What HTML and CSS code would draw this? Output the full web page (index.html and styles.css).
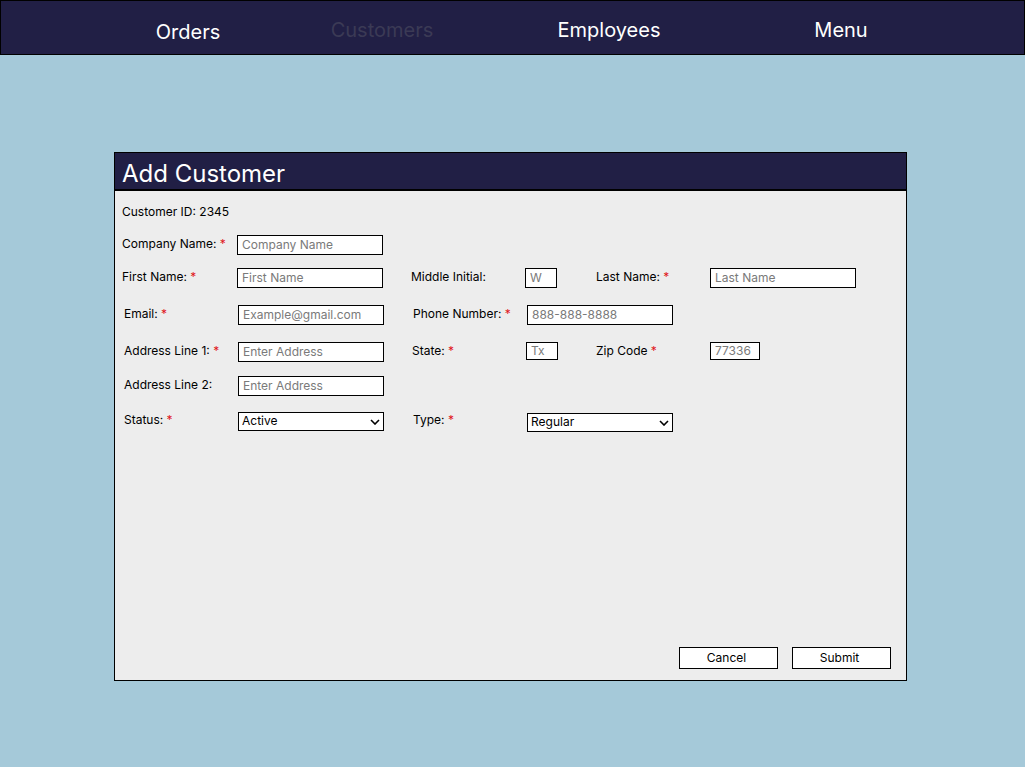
FILE: index.html
```html
<!DOCTYPE html>
<html>
<head>
<meta charset="utf-8">
<link rel="stylesheet" href="styles.css">
</head>
<body>
<nav class="topnav">
  <a class="nav-item nav-orders">Orders</a>
  <a class="nav-item nav-customers">Customers</a>
  <a class="nav-item nav-employees">Employees</a>
  <a class="nav-item nav-menu">Menu</a>
</nav>

<section class="panel">
  <header class="panel-head">Add Customer</header>
  <div class="panel-body">
    <div class="row row-id">Customer ID: 2345</div>

    <div class="row row-company">
      <label class="lbl">Company Name: <span class="req">*</span></label>
      <input class="inp w-wide" placeholder="Company Name">
    </div>

    <div class="row row-name">
      <label class="lbl">First Name: <span class="req">*</span></label>
      <input class="inp w-wide" placeholder="First Name">
      <label class="lbl lbl-mid">Middle Initial:</label>
      <input class="inp w-tiny" placeholder="W">
      <label class="lbl lbl-third">Last Name: <span class="req">*</span></label>
      <input class="inp w-wide" placeholder="Last Name">
    </div>

    <div class="row row-email">
      <label class="lbl">Email: <span class="req">*</span></label>
      <input class="inp w-wide" placeholder="Example@gmail.com">
      <label class="lbl lbl-mid">Phone Number: <span class="req">*</span></label>
      <input class="inp w-wide" placeholder="888-888-8888">
    </div>

    <div class="row row-addr1">
      <label class="lbl">Address Line 1: <span class="req">*</span></label>
      <input class="inp w-wide" placeholder="Enter Address">
      <label class="lbl lbl-mid">State: <span class="req">*</span></label>
      <input class="inp w-tiny short" placeholder="Tx">
      <label class="lbl lbl-zip">Zip Code <span class="req">*</span></label>
      <input class="inp w-zip short" placeholder="77336">
    </div>

    <div class="row row-addr2">
      <label class="lbl">Address Line 2:</label>
      <input class="inp w-wide" placeholder="Enter Address">
    </div>

    <div class="row row-status">
      <label class="lbl">Status: <span class="req">*</span></label>
      <div class="sel-wrap">
        <select class="sel"><option>Active</option></select>
        <svg class="chev" width="10" height="6" viewBox="0 0 10 6"><path d="M1 1 L5 5 L9 1" fill="none" stroke="#000" stroke-width="1.6"/></svg>
      </div>
      <label class="lbl lbl-type">Type: <span class="req">*</span></label>
      <div class="sel-wrap sel-type">
        <select class="sel"><option>Regular</option></select>
        <svg class="chev" width="10" height="6" viewBox="0 0 10 6"><path d="M1 1 L5 5 L9 1" fill="none" stroke="#000" stroke-width="1.6"/></svg>
      </div>
    </div>

    <div class="actions">
      <button class="btn">Cancel</button>
      <button class="btn">Submit</button>
    </div>
  </div>
</section>
</body>
</html>
```

FILE: styles.css
```css
* { box-sizing: border-box; }

html, body {
  margin: 0;
  padding: 0;
}

body {
  background: #a5c9d9;
  font-family: Inter, "Noto Sans", sans-serif;
  width: 1025px;
  height: 767px;
  overflow: hidden;
}

.topnav {
  height: 55px;
  background: #211f45;
  border: 1px solid #000;
  display: flex;
  align-items: center;
  padding: 4px 0 0 90px;
}

.nav-item {
  color: #fff;
  font-size: 20px;
  text-align: center;
  display: block;
}

.nav-orders { width: 194px; padding-top: 4px; }
.nav-customers { width: 194px; color: #3b3a55; }
.nav-employees { width: 260px; }
.nav-menu { width: 204px; }

.panel {
  margin: 97px 0 0 114px;
  width: 793px;
  height: 529px;
  border: 1px solid #000;
  background: #ededed;
  display: flex;
  flex-direction: column;
}

.panel-head {
  height: 38px;
  background: #211f45;
  border-bottom: 2px solid #000;
  color: #fff;
  font-size: 24px;
  line-height: 38px;
  padding: 2px 0 0 7px;
}

.panel-body {
  flex: 1;
  display: flex;
  flex-direction: column;
  padding: 11px 15px 11px 7px;
}

.row {
  display: flex;
  align-items: center;
  height: 20px;
  font-size: 12px;
  color: #000;
}

.row-id { margin-top: 0; padding-bottom: 2px; }
.row-company { margin-top: 13px; }
.row-name { margin-top: 13px; }
.row-email { margin-top: 17px; padding-left: 2px; }
.row-addr1 { margin-top: 17px; padding-left: 2px; }
.row-addr2 { margin-top: 14px; padding-left: 2px; }
.row-status { margin-top: 15px; padding-left: 2px; }

.lbl {
  width: 115px;
  flex: none;
  font-size: 12px;
  padding-bottom: 4px;
}

.row-email .lbl, .row-addr1 .lbl, .row-addr2 .lbl, .row-status .lbl { width: 114px; }

.req { color: #e0151b; }

.lbl-mid { margin-left: 28px; width: 114px; }
.row-email .lbl-mid { margin-left: 29px; }
.lbl-third { margin-left: 39px; width: 114px; }
.row-addr1 .lbl-zip { margin-left: 38px; width: 114px; }
.lbl-type { margin-left: 29px; }

.inp {
  height: 20px;
  border: 1px solid #000;
  background: #fff;
  font-family: Inter, "Noto Sans", sans-serif;
  font-size: 12px;
  padding: 0 0 2px 4px;
  margin: 0;
  outline: none;
  flex: none;
}

.inp::placeholder { color: #7a7a7a; }

.w-wide { width: 146px; }
.w-tiny { width: 32px; }
.w-zip { width: 50px; }
.short { height: 18px; align-self: flex-start; }

.sel-wrap {
  position: relative;
  width: 146px;
  height: 19px;
  flex: none;
}

.sel-type { margin-top: 2px; }

.sel {
  width: 100%;
  height: 100%;
  border: 1px solid #000;
  background: #fff;
  appearance: none;
  -webkit-appearance: none;
  font-family: Inter, "Noto Sans", sans-serif;
  font-size: 12px;
  color: #000;
  padding: 0 0 1px 3px;
  margin: 0;
  border-radius: 0;
}

.chev {
  position: absolute;
  right: 4px;
  top: 7px;
}

.actions {
  margin-top: auto;
  display: flex;
  justify-content: flex-end;
  gap: 14px;
}

.btn {
  width: 99px;
  height: 22px;
  border: 1px solid #000;
  background: #fff;
  font-family: Inter, "Noto Sans", sans-serif;
  font-size: 12px;
  color: #000;
  padding: 0 4px 1px 0;
  border-radius: 0;
}
```
